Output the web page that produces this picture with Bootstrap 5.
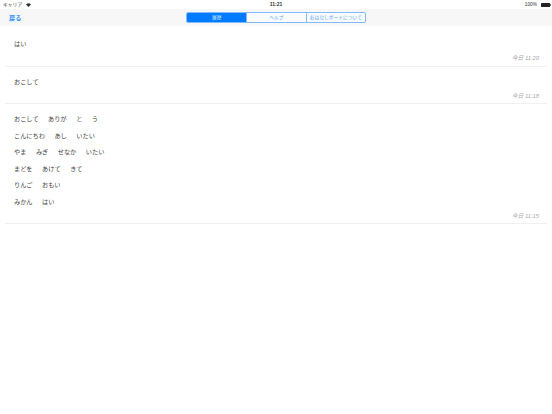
<!DOCTYPE html>
<html lang="ja"><head><meta charset="utf-8">
<title>履歴</title>
<link rel="stylesheet" href="https://cdn.jsdelivr.net/npm/bootstrap@5.3.0/dist/css/bootstrap.min.css">
<style>
html,body{height:100%;background:#fff;}
body{font-family:"Liberation Sans","Noto Sans CJK JP",sans-serif;color:#333;overflow:hidden;}
.statusbar{height:9px;padding:0 1px 0 3px;font-size:4.8px;color:#333;line-height:9px;}
.statusclock{left:0;right:0;text-align:center;font-weight:700;font-size:5px;}
.topbar{height:17px;background:#f7f7f7;padding-left:9px;}
.backlink{font-size:6.2px;font-weight:700;color:#2b8fff;line-height:17px;}
.segs{left:186px;top:3px;width:180px;height:11px;border:.5px solid #7fbcff;border-radius:2px;overflow:hidden;background:#fbfbfb;}
.segitem{width:60px;font-size:4.75px;color:#5aa8ff;text-align:center;line-height:10px;border-left:.5px solid #7fbcff;white-space:nowrap;}
.segitem:first-child{border-left:0;background:#007aff;color:#cfe5ff;}
.logrow{margin:0 5px;padding:0 8px 0 9px;border-bottom:.5px solid #f0f0f0;}
.logline{font-size:6.2px;line-height:16.55px;color:#444;column-gap:9.5px;white-space:nowrap;}
.logtime{font-size:5.8px;font-style:italic;color:#a8a8ac;text-align:right;line-height:8px;}
.firstrow{padding-top:10px;height:40.5px;}
.secondrow{padding-top:7px;height:37.5px;}
.thirdrow{padding-top:7px;height:120px;}
.gaptime{margin-top:1.500px;}
</style></head>
<body>
<div class="statusbar position-relative d-flex justify-content-between align-items-center">
  <div class="d-flex align-items-center gap-1"><span>キャリア</span>
    <svg width="5" height="4" viewBox="0 0 12 9"><path d="M6 9 0 3a8.500 8.500 0 0 1 12 0z" fill="#333"/></svg></div>
  <div class="statusclock position-absolute">11:21</div>
  <div class="d-flex align-items-center gap-1"><span>100%</span>
    <svg width="10" height="4" viewBox="0 0 25 10"><rect width="23" height="10" rx="2" fill="#222"/><rect x="23.500" y="3" width="1.500" height="4" fill="#222"/></svg></div>
</div>
<div class="topbar position-relative d-flex align-items-center">
  <a class="backlink text-decoration-none" href="#">戻る</a>
  <div class="segs position-absolute d-flex">
    <div class="segitem">履歴</div><div class="segitem">ヘルプ</div><div class="segitem">おはなしボードについて</div>
  </div>
</div>
<div class="logrow firstrow"><div class="logline d-flex"><span>はい</span></div><div class="logtime gaptime">今日 11:20</div></div>
<div class="logrow secondrow"><div class="logline d-flex"><span>おこして</span></div><div class="logtime gaptime">今日 11:18</div></div>
<div class="logrow thirdrow">
<div class="logline d-flex"><span>おこして</span><span>ありが</span><span>と</span><span>う</span></div>
<div class="logline d-flex"><span>こんにちわ</span><span>あし</span><span>いたい</span></div>
<div class="logline d-flex"><span>やま</span><span>みぎ</span><span>せなか</span><span>いたい</span></div>
<div class="logline d-flex"><span>まどを</span><span>あけて</span><span>きて</span></div>
<div class="logline d-flex"><span>りんご</span><span>おもい</span></div>
<div class="logline d-flex"><span>みかん</span><span>はい</span></div>
<div class="logtime gaptime">今日 11:15</div>
</div>
<script src="https://cdn.jsdelivr.net/npm/bootstrap@5.3.0/dist/js/bootstrap.bundle.min.js"></script>
</body></html>
